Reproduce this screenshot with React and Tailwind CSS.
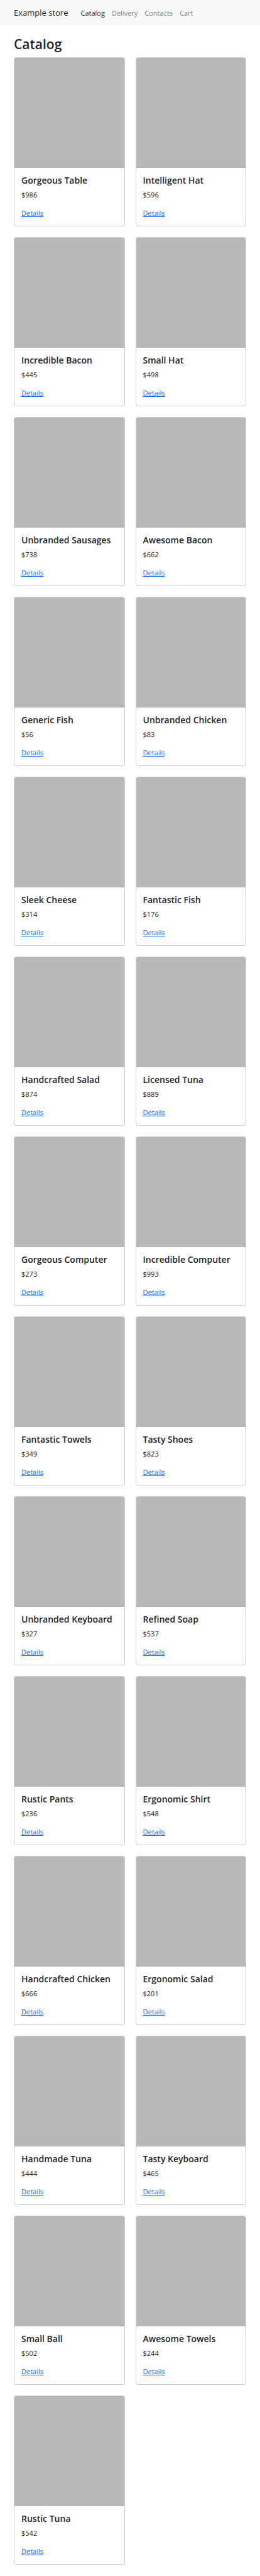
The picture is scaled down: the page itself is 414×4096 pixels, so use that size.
const links = ["Catalog", "Delivery", "Contacts", "Cart"];

const products = [
  ["Gorgeous Table", 986],
  ["Intelligent Hat", 596],
  ["Incredible Bacon", 445],
  ["Small Hat", 498],
  ["Unbranded Sausages", 738],
  ["Awesome Bacon", 662],
  ["Generic Fish", 56],
  ["Unbranded Chicken", 83],
  ["Sleek Cheese", 314],
  ["Fantastic Fish", 176],
  ["Handcrafted Salad", 874],
  ["Licensed Tuna", 889],
  ["Gorgeous Computer", 273],
  ["Incredible Computer", 993],
  ["Fantastic Towels", 349],
  ["Tasty Shoes", 823],
  ["Unbranded Keyboard", 327],
  ["Refined Soap", 537],
  ["Rustic Pants", 236],
  ["Ergonomic Shirt", 548],
  ["Handcrafted Chicken", 666],
  ["Ergonomic Salad", 201],
  ["Handmade Tuna", 444],
  ["Tasty Keyboard", 465],
  ["Small Ball", 502],
  ["Awesome Towels", 244],
  ["Rustic Tuna", 542],
];

function Navbar() {
  return (
    <nav className="flex h-10 items-center bg-[#f8f9fa] px-[22px]">
      <a href="#" className="mr-5 text-[13px] leading-[20px] whitespace-nowrap text-black/90">
        Example store
      </a>
      <ul className="flex gap-[11px] text-[11px] leading-[17px]">
        {links.map((label, i) => (
          <li key={label}>
            <a href="#" className={i === 0 ? "text-black/90" : "text-black/55"}>
              {label}
            </a>
          </li>
        ))}
      </ul>
    </nav>
  );
}

function ProductCard({ name, price }) {
  return (
    <li className="flex flex-col overflow-hidden rounded border border-black/20 bg-white">
      <div className="h-[175px] bg-[#b8b8b8]" />
      <div className="flex flex-col items-start px-[11px] pt-[11px] pb-3 text-[11px] leading-[17px]">
        <h2 className="mb-1.5 text-[14px] leading-[17px] font-semibold whitespace-nowrap">{name}</h2>
        <p className="mb-3">${price}</p>
        <a href="#" className="text-[#0d6efd] underline">
          Details
        </a>
      </div>
    </li>
  );
}

export default function App() {
  return (
    <div className="bg-white font-['Open_Sans','Noto_Sans',sans-serif] text-[#212529]">
      <Navbar />
      <main className="px-[22px] pt-[17px] pb-[18px]">
        <h1 className="mb-[7px] text-[21px] leading-[27px] font-semibold">Catalog</h1>
        <ul className="grid grid-cols-2 gap-[17px]">
          {products.map(([name, price]) => (
            <ProductCard key={name} name={name} price={price} />
          ))}
        </ul>
      </main>
    </div>
  );
}
